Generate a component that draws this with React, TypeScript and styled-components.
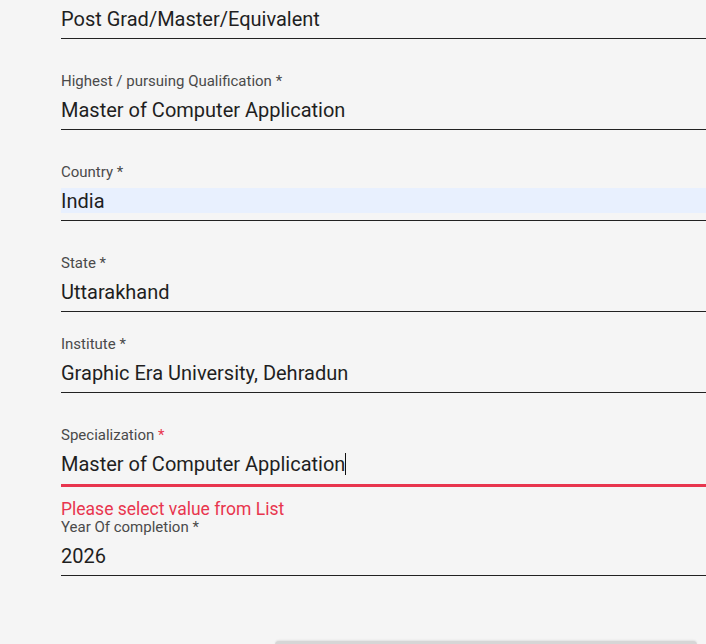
import React from 'react';
import styled, { createGlobalStyle } from 'styled-components';

const GlobalStyle = createGlobalStyle`
  html, body {
    margin: 0;
    padding: 0;
    background: #f5f5f5;
    overflow: hidden;
    font-family: Roboto, "Liberation Sans", Arial, sans-serif;
  }
`;

const FormContainer = styled.div`
  width: 850px;
  padding: 6px 0 0 61px;
  display: flex;
  flex-direction: column;
`;

const Field = styled.div<{ gap: number }>`
  margin-top: ${props => props.gap}px;
  display: flex;
  flex-direction: column;
`;

const Label = styled.label`
  display: block;
  height: 16px;
  line-height: 16px;
  font-size: 15px;
  color: #4a4a4a;
  margin-bottom: 8px;
`;

const Required = styled.span<{ error?: boolean }>`
  color: ${props => (props.error ? '#e8354e' : '#4a4a4a')};
`;

const InputWrap = styled.div<{ error?: boolean }>`
  padding-bottom: ${props => (props.error ? 8 : 7)}px;
  border-bottom: ${props => (props.error ? '3px solid #e8354e' : '1px solid #222')};
`;

const Value = styled.div<{ autofill?: boolean }>`
  height: 24px;
  padding-top: 1px;
  line-height: 24px;
  font-size: 20px;
  color: #1f1f1f;
  white-space: nowrap;
  background: ${props => (props.autofill ? '#e8f0fe' : 'transparent')};
`;

const Caret = styled.span`
  display: inline-block;
  width: 1px;
  height: 22px;
  background: #111;
  vertical-align: -4px;
`;

const ErrorText = styled.div`
  margin-top: 12px;
  height: 20px;
  line-height: 20px;
  font-size: 17.5px;
  color: #e8354e;
`;

const SubmitButton = styled.button`
  margin: 65px auto 0;
  width: 422px;
  height: 40px;
  border: none;
  border-radius: 4px;
  background: #d6d6d6;
  box-shadow: 0 -1px 2px rgba(0, 0, 0, 0.08);
`;

type FieldDef = {
  label: string;
  value: string;
  gap: number;
  autofill?: boolean;
};

const fields: FieldDef[] = [
  { label: 'Highest / pursuing Qualification', value: 'Master of Computer Application', gap: 34 },
  { label: 'Country', value: 'India', gap: 34, autofill: true },
  { label: 'State', value: 'Uttarakhand', gap: 34 },
  { label: 'Institute', value: 'Graphic Era University, Dehradun', gap: 24 },
];

const App: React.FC = () => {
  return (
    <>
      <GlobalStyle />
      <FormContainer>
        <Field gap={0}>
          <InputWrap>
            <Value>Post Grad/Master/Equivalent</Value>
          </InputWrap>
        </Field>

        {fields.map(field => (
          <Field key={field.label} gap={field.gap}>
            <Label>
              {field.label} <Required>*</Required>
            </Label>
            <InputWrap>
              <Value autofill={field.autofill}>{field.value}</Value>
            </InputWrap>
          </Field>
        ))}

        <Field gap={34}>
          <Label>
            Specialization <Required error>*</Required>
          </Label>
          <InputWrap error>
            <Value>
              Master of Computer Application
              <Caret />
            </Value>
          </InputWrap>
          <ErrorText>Please select value from List</ErrorText>
        </Field>

        <Field gap={0}>
          <Label>
            Year Of completion <Required>*</Required>
          </Label>
          <InputWrap>
            <Value>2026</Value>
          </InputWrap>
        </Field>

        <SubmitButton type="button" aria-label="submit" />
      </FormContainer>
    </>
  );
};

export default App;
